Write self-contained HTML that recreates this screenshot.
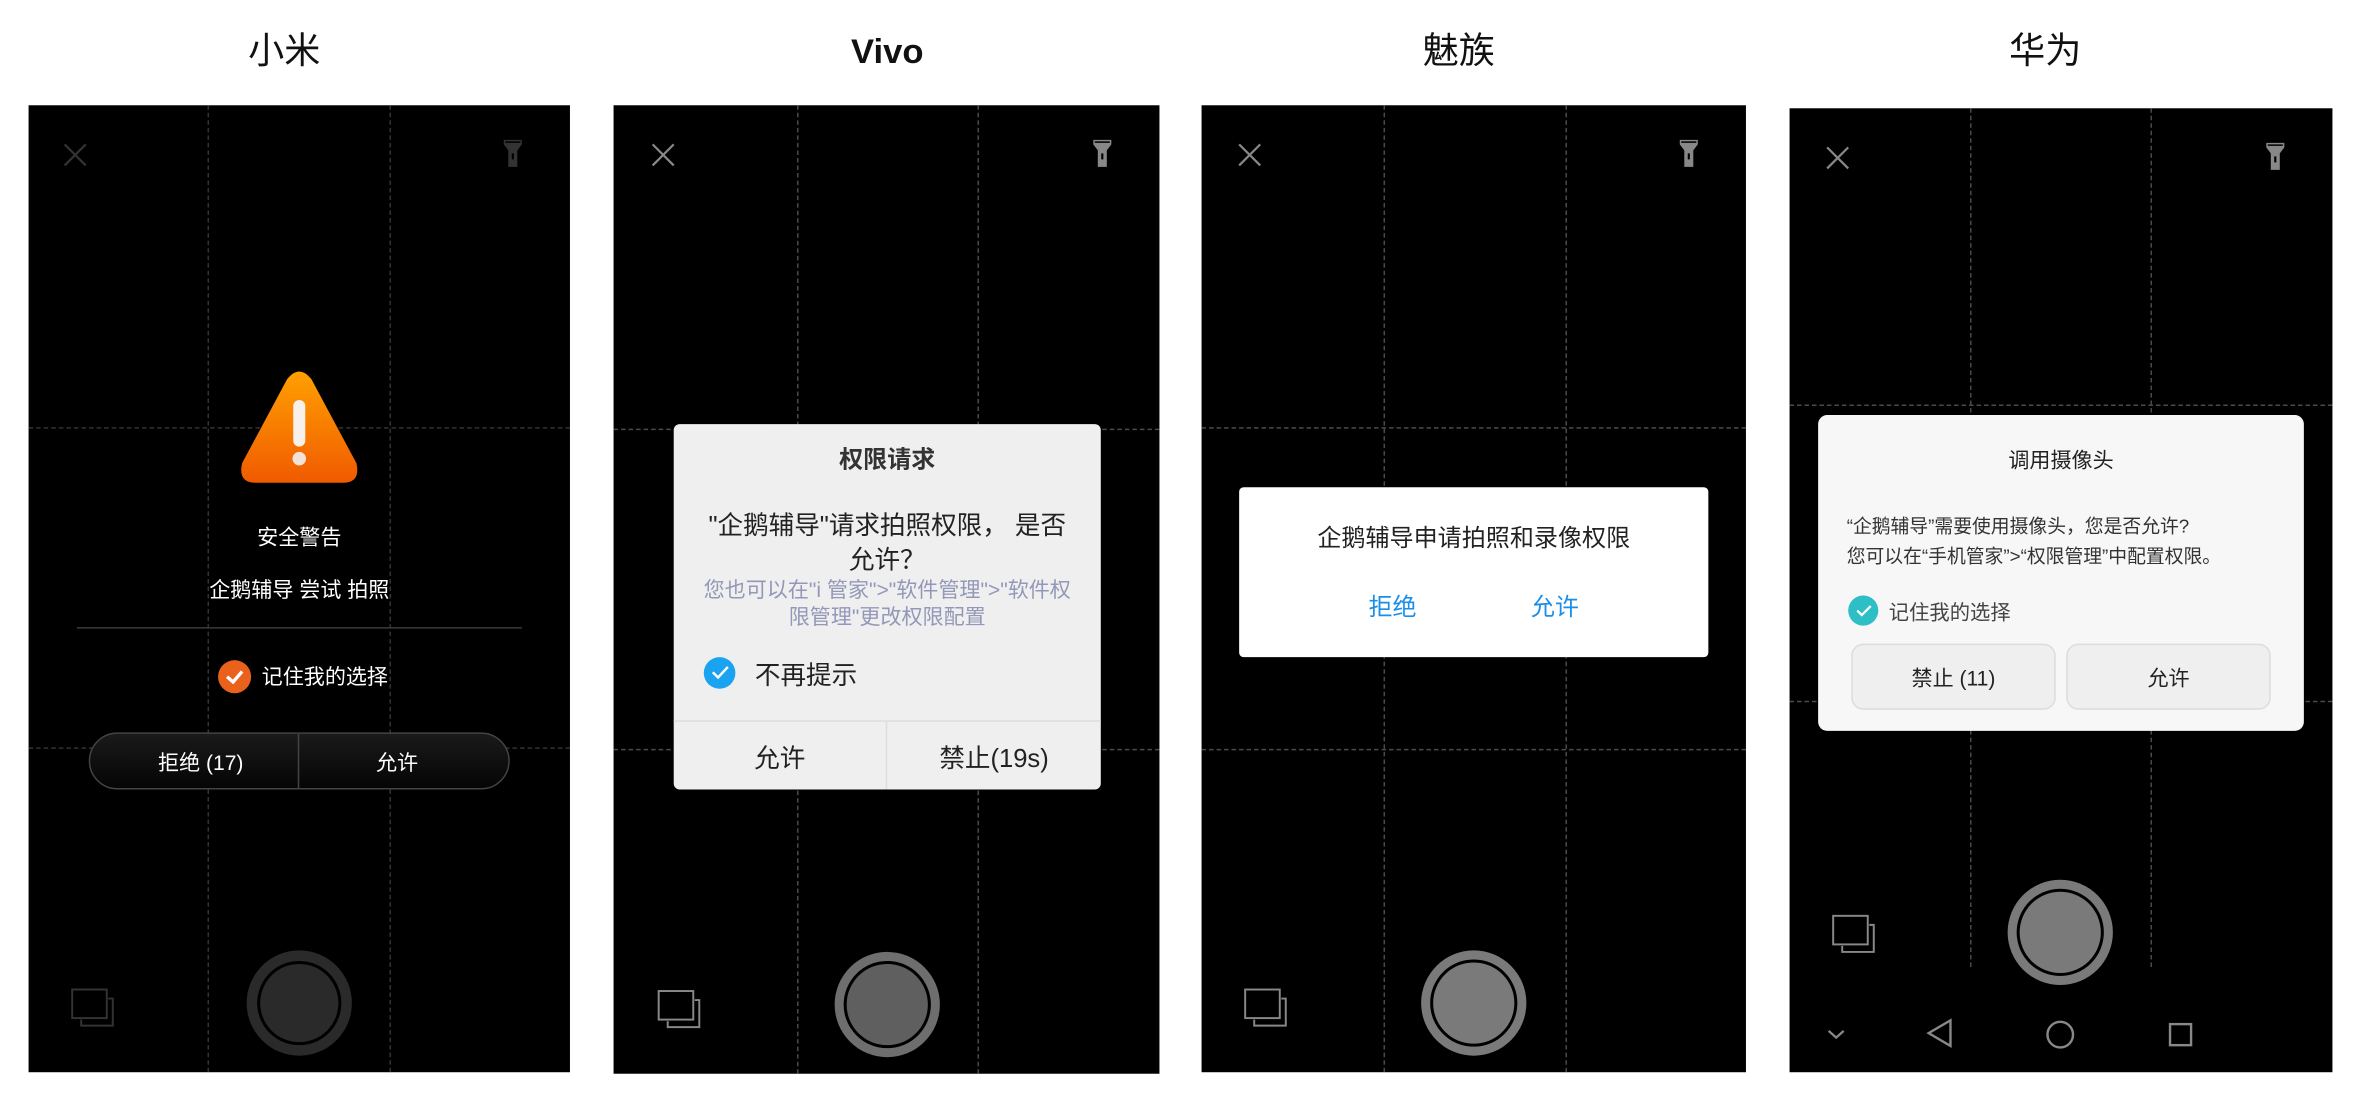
<!DOCTYPE html>
<html><head><meta charset="utf-8"><style>
*{margin:0;padding:0;box-sizing:border-box}
html,body{width:2358px;height:1102px;background:#fff;overflow:hidden}
#w{position:absolute;left:0;top:0;width:1568px;height:733px;transform:scale(1.50383);transform-origin:0 0;font-family:"Liberation Sans","Noto Sans CJK SC",sans-serif}
.a{position:absolute}
.t{position:absolute;top:18px;font-size:24px;line-height:30px;color:#111;width:200px;text-align:center}
.p{position:absolute;background:#000;overflow:hidden}
.v{position:absolute;top:0;bottom:0;width:0;border-left:1px dashed #4a4a4a}
.h{position:absolute;left:0;right:0;height:0;border-top:1px dashed #4a4a4a}
.c{position:absolute;text-align:center;white-space:nowrap}
</style></head><body><div id="w">
<div class="t" style="left:89px;top:20px">小米</div>
<div class="t" style="left:490px;top:19px;font-size:23px;font-weight:bold">Vivo</div>
<div class="t" style="left:870px;top:20px">魅族</div>
<div class="t" style="left:1260px;top:20px">华为</div>

<!-- Panel 1 -->
<div class="p" style="left:19px;top:70px;width:360px;height:643px">
<div class="v" style="left:119px;border-color:#333"></div><div class="v" style="left:240px;border-color:#333"></div>
<div class="h" style="top:214px;border-color:#333"></div><div class="h" style="top:427px;border-color:#333"></div>
<svg class="a" style="left:22px;top:24px" width="18" height="18"><path d="M2 2L16 16M16 2L2 16" stroke="#333" stroke-width="1.5"/></svg>
<svg class="a" style="left:315px;top:22px" width="14" height="20"><path d="M1 1H13V4L10 8V19H4V8L1 4Z" fill="#333"/><rect x="6.3" y="10" width="1.4" height="4" fill="#000"/><rect x="2" y="2" width="10" height="1" fill="#000"/></svg>
<svg class="a" style="left:139px;top:176px" width="82" height="78"><defs><linearGradient id="og" x1="0" y1="0" x2="0" y2="1"><stop offset="0" stop-color="#ffa000"/><stop offset="1" stop-color="#f05a00"/></linearGradient></defs><path d="M33 6Q41 -4 49 6L79 62Q82 75 70 75H12Q0 75 3 62Z" fill="url(#og)"/><rect x="37" y="20" width="8" height="31" rx="4" fill="#f8f0ea"/><circle cx="41" cy="59" r="4.5" fill="#f3e2d8"/></svg>
<div class="c" style="left:0;width:360px;top:277px;color:#fff;font-size:14px">安全警告</div>
<div class="c" style="left:0;width:360px;top:312px;color:#fff;font-size:14px">企鹅辅导 尝试 拍照</div>
<div class="a" style="left:32px;width:296px;top:347px;height:1px;background:#3a3a3a"></div>
<div class="a" style="left:126px;top:369px;width:22px;height:22px;border-radius:50%;background:#e9611a"></div>
<svg class="a" style="left:131px;top:375px" width="12" height="10"><path d="M1 5L5 8.5L11 1.5" stroke="#fff" stroke-width="2.2" fill="none"/></svg>
<div class="a" style="left:155px;top:370px;color:#fff;font-size:14px">记住我的选择</div>
<div class="a" style="left:40px;top:417px;width:280px;height:38px;border:1px solid #444;border-radius:19px;background:linear-gradient(#1a1a1a,#050505)"></div>
<div class="a" style="left:179px;top:418px;width:1px;height:36px;background:#444"></div>
<div class="c" style="left:40px;width:149px;top:427px;color:#fff;font-size:14px">拒绝 (17)</div>
<div class="c" style="left:180px;width:130px;top:427px;color:#fff;font-size:14px">允许</div>
<svg class="a" style="left:28px;top:587px" width="30" height="28"><rect x="1" y="1" width="23" height="19" fill="none" stroke="#333" stroke-width="1.3"/><path d="M7 21V25H28V7H25" fill="none" stroke="#333" stroke-width="1.3"/></svg>
<div class="a" style="left:145px;top:562px;width:70px;height:70px;border-radius:50%;background:#2a2a2a"></div>
<div class="a" style="left:152px;top:569px;width:56px;height:56px;border-radius:50%;background:#000"></div>
<div class="a" style="left:154px;top:571px;width:52px;height:52px;border-radius:50%;background:#2a2a2a"></div>
</div>

<!-- Panel 2 -->
<div class="p" style="left:408px;top:70px;width:363px;height:644px">
<div class="v" style="left:122px"></div><div class="v" style="left:242px"></div>
<div class="h" style="top:215px"></div><div class="h" style="top:428px"></div>
<svg class="a" style="left:24px;top:24px" width="18" height="18"><path d="M2 2L16 16M16 2L2 16" stroke="#888" stroke-width="1.5"/></svg>
<svg class="a" style="left:318px;top:22px" width="14" height="20"><path d="M1 1H13V4L10 8V19H4V8L1 4Z" fill="#888"/><rect x="6.3" y="10" width="1.4" height="4" fill="#000"/><rect x="2" y="2" width="10" height="1" fill="#000"/></svg>
<div class="a" style="left:40px;top:212px;width:284px;height:243px;background:#efefef;border-radius:4px"></div>
<div class="c" style="left:40px;width:284px;top:222px;font-size:16px;font-weight:bold;color:#333">权限请求</div>
<div class="c" style="left:40px;width:284px;top:268px;font-size:17px;line-height:23px;color:#222">"企鹅辅导"请求拍照权限， 是否<br>允许？</div>
<div class="c" style="left:40px;width:284px;top:313px;font-size:14px;line-height:18px;color:#9398b8">您也可以在"i 管家"&gt;"软件管理"&gt;"软件权<br>限管理"更改权限配置</div>
<div class="a" style="left:60px;top:367px;width:21px;height:21px;border-radius:50%;background:#1aa3f0"></div>
<svg class="a" style="left:65px;top:372px" width="12" height="10"><path d="M1 5L4.5 8.5L11 1.5" stroke="#fff" stroke-width="1.6" fill="none"/></svg>
<div class="a" style="left:94px;top:365px;font-size:17px;color:#222">不再提示</div>
<div class="a" style="left:40px;top:409px;width:284px;height:1px;background:#ddd"></div>
<div class="a" style="left:181px;top:410px;width:1px;height:45px;background:#ddd"></div>
<div class="c" style="left:40px;width:141px;top:420px;font-size:17px;color:#222">允许</div>
<div class="c" style="left:182px;width:142px;top:420px;font-size:17px;color:#222">禁止(19s)</div>
<svg class="a" style="left:29px;top:588px" width="30" height="28"><rect x="1" y="1" width="23" height="19" fill="none" stroke="#888" stroke-width="1.3"/><path d="M7 21V25H28V7H25" fill="none" stroke="#888" stroke-width="1.3"/></svg>
<div class="a" style="left:147px;top:563px;width:70px;height:70px;border-radius:50%;background:#6e6e6e"></div>
<div class="a" style="left:153px;top:569px;width:58px;height:58px;border-radius:50%;background:#000"></div>
<div class="a" style="left:155px;top:571px;width:54px;height:54px;border-radius:50%;background:#5f5f5f"></div>
</div>

<!-- Panel 3 -->
<div class="p" style="left:799px;top:70px;width:362px;height:643px">
<div class="v" style="left:121px"></div><div class="v" style="left:242px"></div>
<div class="h" style="top:214px"></div><div class="h" style="top:428px"></div>
<svg class="a" style="left:23px;top:24px" width="18" height="18"><path d="M2 2L16 16M16 2L2 16" stroke="#888" stroke-width="1.5"/></svg>
<svg class="a" style="left:317px;top:22px" width="14" height="20"><path d="M1 1H13V4L10 8V19H4V8L1 4Z" fill="#888"/><rect x="6.3" y="10" width="1.4" height="4" fill="#000"/><rect x="2" y="2" width="10" height="1" fill="#000"/></svg>
<div class="a" style="left:25px;top:254px;width:312px;height:113px;background:#fff;border-radius:3px"></div>
<div class="c" style="left:25px;width:312px;top:274px;font-size:16px;color:#222">企鹅辅导申请拍照和录像权限</div>
<div class="c" style="left:97px;width:60px;top:320px;font-size:16px;color:#1a8fe8">拒绝</div>
<div class="c" style="left:205px;width:60px;top:320px;font-size:16px;color:#1a8fe8">允许</div>
<svg class="a" style="left:28px;top:587px" width="30" height="28"><rect x="1" y="1" width="23" height="19" fill="none" stroke="#888" stroke-width="1.3"/><path d="M7 21V25H28V7H25" fill="none" stroke="#888" stroke-width="1.3"/></svg>
<div class="a" style="left:146px;top:562px;width:70px;height:70px;border-radius:50%;background:#7a7a7a"></div>
<div class="a" style="left:152px;top:568px;width:58px;height:58px;border-radius:50%;background:#000"></div>
<div class="a" style="left:154px;top:570px;width:54px;height:54px;border-radius:50%;background:#7a7a7a"></div>
</div>

<!-- Panel 4 -->
<div class="p" style="left:1190px;top:72px;width:361px;height:641px">
<div class="v" style="left:120px;bottom:70px"></div><div class="v" style="left:240px;bottom:70px"></div>
<div class="h" style="top:197px"></div><div class="h" style="top:394px"></div>
<svg class="a" style="left:23px;top:24px" width="18" height="18"><path d="M2 2L16 16M16 2L2 16" stroke="#888" stroke-width="1.5"/></svg>
<svg class="a" style="left:316px;top:22px" width="14" height="20"><path d="M1 1H13V4L10 8V19H4V8L1 4Z" fill="#888"/><rect x="6.3" y="10" width="1.4" height="4" fill="#000"/><rect x="2" y="2" width="10" height="1" fill="#000"/></svg>
<div class="a" style="left:19px;top:204px;width:323px;height:210px;background:#f7f7f7;border-radius:6px"></div>
<div class="c" style="left:19px;width:323px;top:224px;font-size:14px;color:#222">调用摄像头</div>
<div class="a" style="left:38px;top:268px;font-size:12.5px;line-height:20px;color:#333;white-space:nowrap">“企鹅辅导”需要使用摄像头，您是否允许?<br>您可以在“手机管家”&gt;“权限管理”中配置权限。</div>
<div class="a" style="left:39px;top:324px;width:20px;height:20px;border-radius:50%;background:#2dbec6"></div>
<svg class="a" style="left:44px;top:329px" width="11" height="10"><path d="M1 5L4 8L10 2" stroke="#fff" stroke-width="1.5" fill="none"/></svg>
<div class="a" style="left:66px;top:324px;font-size:13.5px;color:#444">记住我的选择</div>
<div class="a" style="left:41px;top:356px;width:136px;height:44px;background:#efefef;border:1px solid #dcdcdc;border-radius:8px"></div>
<div class="a" style="left:184px;top:356px;width:136px;height:44px;background:#efefef;border:1px solid #dcdcdc;border-radius:8px"></div>
<div class="c" style="left:41px;width:136px;top:369px;font-size:14px;color:#222">禁止 (11)</div>
<div class="c" style="left:184px;width:136px;top:369px;font-size:14px;color:#222">允许</div>
<svg class="a" style="left:28px;top:536px" width="30" height="28"><rect x="1" y="1" width="23" height="19" fill="none" stroke="#888" stroke-width="1.3"/><path d="M7 21V25H28V7H25" fill="none" stroke="#888" stroke-width="1.3"/></svg>
<div class="a" style="left:145px;top:513px;width:70px;height:70px;border-radius:50%;background:#7a7a7a"></div>
<div class="a" style="left:151px;top:519px;width:58px;height:58px;border-radius:50%;background:#000"></div>
<div class="a" style="left:153px;top:521px;width:54px;height:54px;border-radius:50%;background:#7a7a7a"></div>
<svg class="a" style="left:25px;top:612px" width="12" height="8"><path d="M1 1.5L6 6L11 1.5" stroke="#888" stroke-width="1.5" fill="none"/></svg>
<svg class="a" style="left:91px;top:605px" width="18" height="20"><path d="M16 1.5V18.5L1.5 10Z" fill="none" stroke="#888" stroke-width="1.6"/></svg>
<svg class="a" style="left:170px;top:606px" width="20" height="20"><circle cx="10" cy="10" r="8.5" fill="none" stroke="#888" stroke-width="1.6"/></svg>
<svg class="a" style="left:252px;top:608px" width="16" height="16"><rect x="1" y="1" width="14" height="14" fill="none" stroke="#888" stroke-width="1.6"/></svg>
</div>
</div></body></html>
